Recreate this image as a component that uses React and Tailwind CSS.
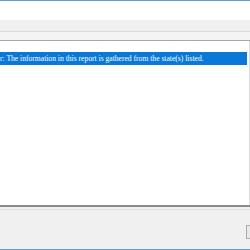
import React from 'react';

export default function App() {
  return (
    <div className="w-[250px] h-[250px] overflow-hidden flex flex-col bg-white" style={{ fontFamily: '"Liberation Serif", serif' }}>
      {/* window frame top */}
      <div className="h-px bg-[#5a9fdc]" />
      <div className="h-[19px] bg-white" />

      {/* toolbar */}
      <div className="h-[11px] bg-[#f0f0f0]" />
      <div className="h-px bg-[#dadada]" />
      <div className="h-[8px] bg-[#f4f4f4]" />
      <div className="h-px bg-[#a7a7a7]" />

      {/* report body */}
      <div className="flex-1 flex flex-col pr-[2px] border-r border-[#dcdcdc]">
        <div className="h-[11px]" />
        <div className="h-[13px] bg-[#0a78d7] text-white text-[7.6px] leading-[13px] whitespace-nowrap overflow-hidden">
          r: The information in this report is gathered from the state(s) listed.
        </div>
        <div className="flex-1" />
      </div>

      {/* status area */}
      <div className="h-[2px] bg-[#8a8a8a]" />
      <div className="h-[42px] bg-[#f0f0f0] flex flex-col">
        <div className="h-[2px]" />
        <div className="h-px bg-[#e2e2e2]" />
        <div className="flex-1 flex items-center justify-end">
          <div className="w-[4px] h-[14px] mt-[4px] border border-r-0 border-[#adadad] bg-[#e8e8e8]" />
        </div>
      </div>
      <div className="h-px bg-[#5a9fdc]" />
    </div>
  );
}
